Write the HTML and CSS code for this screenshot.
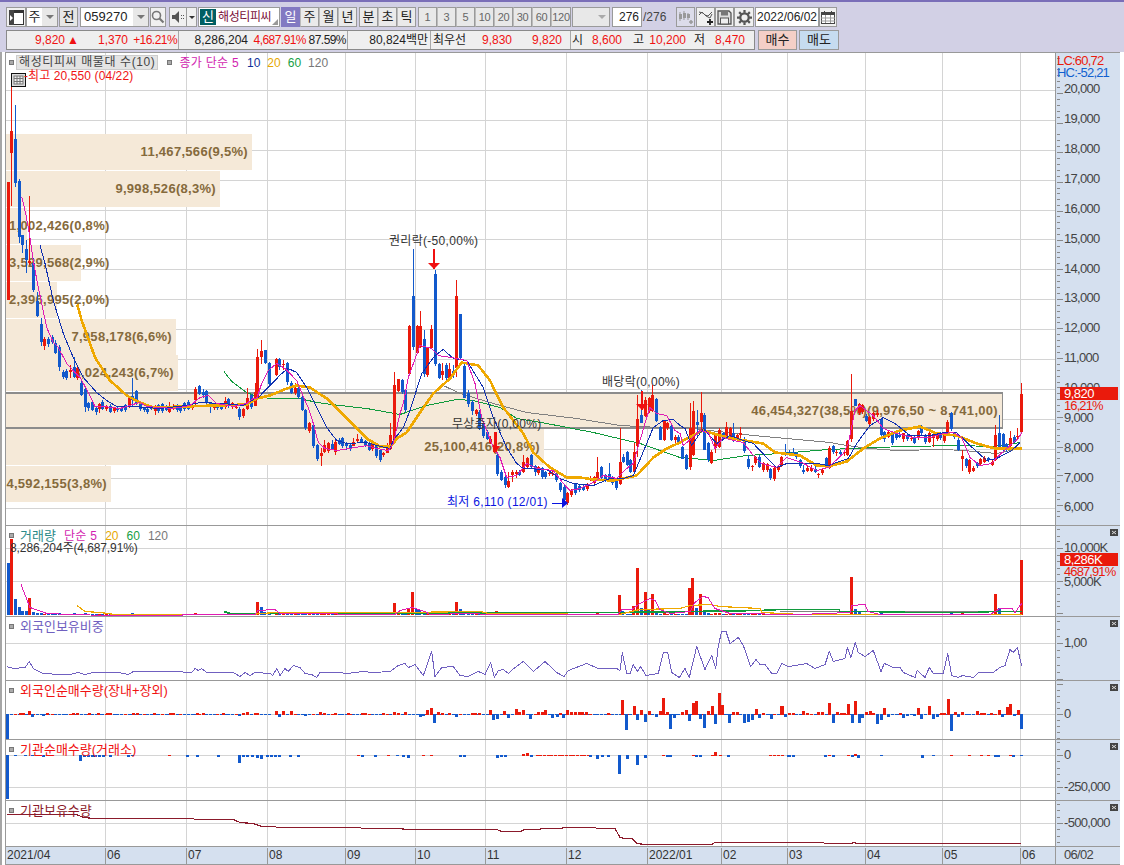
FILE: index.html
```html
<!DOCTYPE html>
<html lang="ko">
<head>
<meta charset="utf-8">
<title>해성티피씨 차트</title>
<link rel="stylesheet" href="styles.css">
</head>
<body>
<div class="topline"></div>
<div class="toolbar">
  <button class="btn w20"><svg width="15" height="15" viewBox="0 0 15 15"><rect x="0.500" y="0.500" width="14" height="14" fill="#fff" stroke="#333"/><rect x="0" y="0" width="15" height="3" fill="#333"/><rect x="0" y="0" width="5" height="15" fill="#444"/><path d="M1 5l3 3-3 3z" fill="#fff"/></svg></button>
  <div class="combo ml0 w32"><span class="combo-txt">주</span><span class="arrow w15"><i class="down"></i></span></div>
  <button class="btn w19 ml1 gray">전</button>
  <div class="combo ml2 w69"><span class="combo-txt code">059270</span><span class="arrow w15"><i class="down"></i></span></div>
  <button class="btn w16 ml1"><svg width="14" height="14" viewBox="0 0 14 14"><circle cx="5.500" cy="5.500" r="4" fill="none" stroke="#777" stroke-width="1.6"/><path d="M8.500 8.500l4 4" stroke="#777" stroke-width="2.2"/></svg></button>
  <button class="btn w18 ml3"><svg width="14" height="14" viewBox="0 0 14 14"><path d="M1 5h3l4-4v12l-4-4H1z" fill="#555"/><path d="M10 5h1v1h-1zM12 5h1v1h-1zM10 8h1v1h-1zM12 8h1v1h-1z" fill="#555"/></svg></button>
  <span class="arrow w10 boxed"><i class="down dark"></i></span>
  <div class="name ml1"><span class="sin">신</span><span class="name-txt">해성티피씨</span><i class="corner"></i></div>
  <div class="tabs ml1">
    <button class="tab active">일</button><button class="tab">주</button><button class="tab">월</button><button class="tab">년</button>
  </div>
  <div class="tabs ml2">
    <button class="tab">분</button><button class="tab">초</button><button class="tab">틱</button>
  </div>
  <div class="tabs ml2 light">
    <button class="tab">1</button><button class="tab">3</button><button class="tab">5</button><button class="tab">10</button><button class="tab">20</button><button class="tab">30</button><button class="tab">60</button><button class="tab wide">120</button>
  </div>
  <div class="combo ml1 w38 disabled"><span class="combo-txt"></span><span class="arrow w15"><i class="down pale"></i></span></div>
  <span class="count ml2">276</span><span class="total">/276</span>
  <button class="btn w19 pale-btn"><svg width="16" height="16" viewBox="0 0 16 16"><path d="M2 3v9M6 2v9M10 4v7" stroke="#999"/><rect x="1" y="5" width="3" height="5" fill="#999"/><rect x="5" y="4" width="3" height="5" fill="#999"/><rect x="9" y="5" width="3" height="4" fill="#999"/><path d="M11 13h4M13 11v4" stroke="#999" stroke-width="1.5"/></svg></button>
  <button class="btn w19 ml1"><svg width="16" height="16" viewBox="0 0 16 16"><path d="M1 6l3-3 3 3 3 1 4-4M1 3l4 1 3 3 4 2 2-4" fill="none" stroke="#555"/><path d="M9 13h6M12 10v6" stroke="#222" stroke-width="1.8"/></svg></button>
  <button class="btn w19"><svg width="15" height="15" viewBox="0 0 15 15"><path d="M1 1h11l2 2v11H1z" fill="#ddd" stroke="#555" stroke-width="1.3"/><rect x="4" y="1.500" width="7" height="4" fill="#777"/><rect x="3.500" y="8" width="8" height="6" fill="#eee" stroke="#555"/></svg></button>
  <button class="btn w20"><svg width="15" height="15" viewBox="0 0 16 16"><circle cx="8" cy="8" r="4.500" fill="none" stroke="#555" stroke-width="2.4"/><path d="M8 0v3M8 13v3M0 8h3M13 8h3M2.300 2.300l2.200 2.200M11.500 11.500l2.200 2.200M2.300 13.700l2.200-2.200M11.500 4.500l2.200-2.200" stroke="#555" stroke-width="2.4"/></svg></button>
  <span class="date ml1">2022/06/02</span>
  <button class="btn w18"><svg width="14" height="13" viewBox="0 0 14 13"><rect x="0.500" y="1.500" width="13" height="11" fill="#fff" stroke="#444"/><rect x="0" y="1" width="14" height="3" fill="#444"/><rect x="3" y="0" width="1" height="2" fill="#444"/><rect x="10" y="0" width="1" height="2" fill="#444"/><path d="M0 7h14M0 10h14M4.500 4v8M9.500 4v8" stroke="#999"/></svg></button>
</div>

<div class="inforow">
  <div class="info">
    <div class="cell cell-a">
      <span class="red a1">9,820</span><span class="red tri">▲</span><span class="red a3">1,370</span><span class="red a4 tight">+16.21%</span>
    </div>
    <div class="cell cell-b">
      <span class="b1">8,286,204</span><span class="red b2 tight">4,687.91%</span><span class="b3 tight">87.59%</span>
    </div>
    <div class="cell cell-c"><span class="c1">80,824백만</span></div>
    <div class="cell cell-d">
      <span class="d1">최우선</span><span class="red d2">9,830</span><span class="red d3">9,820</span>
    </div>
    <div class="cell cell-e">
      <span class="e-l">시</span><span class="red e1">8,600</span><span class="e-l e-g1">고</span><span class="red e2">10,200</span><span class="e-l e-g2">저</span><span class="red e3">8,470</span>
    </div>
  </div>
  <button class="trade buy">매수</button>
  <button class="trade sell">매도</button>
</div>

<main class="chart">
  <div class="frame">
    <section class="panel p-main">
      <div class="plot">
        <svg class="layer" id="main-grid"></svg>
        <div class="vp vp1"><b class="vl">11,467,566(9,5%)</b></div>
        <div class="vp vp2"><b class="vl">9,998,526(8,3%)</b></div>
        <div class="vp vp3"><b class="vl vl-left">1,002,426(0,8%)</b></div>
        <div class="vp vp4"><b class="vl vl-left">3,529,568(2,9%)</b></div>
        <div class="vp vp5"><b class="vl vl-left">2,396,995(2,0%)</b></div>
        <div class="vp vp6"><b class="vl">7,958,178(6,6%)</b></div>
        <div class="vp vp7"><b class="vl">8,024,243(6,7%)</b></div>
        <div class="vp vp8"><b class="vl">46,454,327(38,5%)(9,976,50 ~ 8,741,00)</b></div>
        <div class="vp vp9"><b class="vl">25,100,416(20,8%)</b></div>
        <div class="vp vp10"><b class="vl">4,592,155(3,8%)</b></div>
        <svg class="layer" id="main-top"></svg>
        <div class="legend">
          <i class="sq"></i><span class="legend-box">해성티피씨 매물대 수(10)</span>
          <i class="sq sq2"></i><span class="mag lg1">종가 단순 5</span><span class="navy lg2">10</span><span class="ora lg3">20</span><span class="grn lg3">60</span><span class="gry lg3">120</span>
        </div>
        <svg class="tbl-icon" width="15" height="14" viewBox="0 0 15 14"><rect x="0.500" y="0.500" width="14" height="13" fill="#ddd" stroke="#111"/><rect x="3" y="3" width="9" height="8" fill="#eee" stroke="#777"/><path d="M3 5.500h9M3 8.500h9M6 3v8M9 3v8" stroke="#777"/></svg>
        <span class="note hi-note">-최고 20,550 (04/22)</span>
        <span class="note n-right">권리락(-50,00%)</span>
        <span class="note n-div">배당락(0,00%)</span>
        <span class="note n-free">무상증자(0,00%)</span>
        <span class="note lo-note">최저 6,110 (12/01)</span>
      </div>
      <div class="axis" data-major="90" data-step="29.88" data-sub="5">
        <span class="lc">LC:60,72</span>
        <span class="hc">HC:-52,21</span>
        <span class="ax" style="top:29px">20,000</span><span class="ax" style="top:59px">19,000</span><span class="ax" style="top:89px">18,000</span><span class="ax" style="top:119px">17,000</span><span class="ax" style="top:149px">16,000</span><span class="ax" style="top:179px">15,000</span><span class="ax" style="top:209px">14,000</span><span class="ax" style="top:238px">13,000</span><span class="ax" style="top:268px">12,000</span><span class="ax" style="top:298px">11,000</span><span class="ax" style="top:328px">10,000</span><span class="ax" style="top:358px">9,000</span><span class="ax" style="top:388px">8,000</span><span class="ax" style="top:418px">7,000</span><span class="ax" style="top:447px">6,000</span>
        <span class="tag tag-main">9,820</span>
        <span class="tag-sub sub-main">16,21%</span>
      </div>
    </section>

    <section class="panel p-vol">
      <div class="plot">
        <svg class="layer" id="vol"></svg>
        <div class="legend legend-sub">
          <i class="sq"></i><span class="teal lv1">거래량</span><span class="mag lv2">단순 5</span><span class="ora lv3">20</span><span class="grn lv3">60</span><span class="gry lv3">120</span>
        </div>
        <span class="note vol-note">8,286,204주(4,687,91%)</span>
      </div>
      <div class="axis" data-major="548" data-step="33" data-sub="5">
        <i class="close"></i>
        <span class="ax" style="top:15px">10,000K</span><span class="ax" style="top:49px">5,000K</span>
        <span class="tag tag-vol">8,286K</span>
        <span class="tag-sub sub-vol">4687,91%</span>
      </div>
    </section>

    <section class="panel p-for">
      <div class="plot">
        <svg class="layer" id="for"></svg>
        <div class="legend legend-sub"><i class="sq"></i><span class="pur lv1">외국인보유비중</span></div>
      </div>
      <div class="axis" data-major="643" data-step="36" data-sub="5">
        <i class="close"></i>
        <span class="ax" style="top:19px">1,00</span>
      </div>
    </section>

    <section class="panel p-net">
      <div class="plot">
        <svg class="layer" id="net"></svg>
        <div class="legend legend-sub"><i class="sq"></i><span class="red lv1">외국인순매수량(장내+장외)</span></div>
      </div>
      <div class="axis" data-major="714" data-step="30" data-sub="5">
        <i class="close"></i>
        <span class="ax" style="top:26px">0</span>
      </div>
    </section>

    <section class="panel p-ins">
      <div class="plot">
        <svg class="layer" id="ins"></svg>
        <div class="legend legend-sub"><i class="sq"></i><span class="red lv1">기관순매수량(거래소)</span></div>
      </div>
      <div class="axis" data-major="755" data-step="32" data-sub="5">
        <i class="close"></i>
        <span class="ax" style="top:8px">0</span><span class="ax" style="top:40px">-250,000</span>
      </div>
    </section>

    <section class="panel p-hol">
      <div class="plot">
        <svg class="layer" id="hol"></svg>
        <div class="legend legend-sub"><i class="sq"></i><span class="mar lv1">기관보유수량</span></div>
      </div>
      <div class="axis" data-major="823" data-step="32" data-sub="5">
        <i class="close"></i>
        <span class="ax" style="top:15px">-500,000</span>
      </div>
    </section>

    <section class="panel p-x">
      <div class="plot xplot">
        <span class="xl x0">2021/04</span><span class="xl x1">06</span><span class="xl x2">07</span><span class="xl x3">08</span><span class="xl x4">09</span><span class="xl x5">10</span><span class="xl x6">11</span><span class="xl x7">12</span><span class="xl x8">2022/01</span><span class="xl x9">02</span><span class="xl x10">03</span><span class="xl x11">04</span><span class="xl x12">05</span><span class="xl x13">06</span>
      </div>
      <div class="axis xaxis"><span class="ax xdate">06/02</span></div>
    </section>
  </div>
</main>
<script src="script.js"></script>
</body>
</html>
```

FILE: styles.css
```css
* { box-sizing: border-box; }
html, body { margin: 0; padding: 0; }
body {
  width: 1124px; height: 865px; overflow: hidden;
  background: #d2d0e5;
  font: 12px/14px "Liberation Sans", "Noto Sans CJK KR", sans-serif;
  color: #222;
}
button { font: inherit; color: inherit; padding: 0; margin: 0; }
.topline { height: 2px; background: #7a6eb8; }

.toolbar { display: flex; height: 20px; margin: 5px 0 0 6px; }
.btn, .tab, .combo, .count, .date, .name, .boxed {
  height: 20px; border: 1px solid #9a9a9a; background: #f0f0f0;
  display: flex; align-items: center; justify-content: center; flex: none;
}
.gray { background: #e6e6e6; font-size: 13px; }
.pale-btn { background: #dcdcea; }
.w16 { width: 16px; } .w18 { width: 18px; } .w19 { width: 19px; } .w20 { width: 20px; }
.w32 { width: 32px; } .w38 { width: 38px; } .w69 { width: 69px; }
.ml0 { margin-left: 0; } .ml1 { margin-left: 1px; } .ml2 { margin-left: 2px; } .ml3 { margin-left: 3px; }
.combo { background: #fff; justify-content: flex-start; }
.combo-txt { flex: 1; text-align: center; font-size: 13px; }
.code { text-align: left; padding-left: 3px; font-size: 13px; letter-spacing: 0; }
.arrow { height: 18px; background: #e8e8e8; display: flex; align-items: center; justify-content: center; flex: none; }
.w15 { width: 15px; } .w10 { width: 10px; }
.boxed { height: 20px; background: #f0f0f0; border-left: 0; }
.down { width: 0; height: 0; border: 4px solid transparent; border-top: 4px solid #777; border-bottom: 0; }
.down.dark { border-top-color: #333; border-width: 3px 3px 0; }
.down.pale { border-top-color: #aaa; }
.disabled { background: #e8e8e8; }
.name { width: 82px; background: #fff; justify-content: flex-start; position: relative; padding-left: 1px; }
.sin { width: 16px; height: 16px; background: #005f63; color: #fff; text-align: center; line-height: 15px; font-size: 13px; flex: none; }
.name-txt { color: #7a0f38; font-size: 12px; letter-spacing: -.4px; margin-left: 2px; }
.corner { position: absolute; right: 1px; bottom: 1px; width: 0; height: 0; border-left: 6px solid transparent; border-bottom: 6px solid #999; }
.tabs { display: flex; }
.tab { width: 19px; background: #eaeaea; font-size: 13px; }
.tab + .tab { border-left: 1px solid #bbb; }
.tab.active { background: #8279c2; color: #fff; border-color: #8279c2; }
.light .tab { color: #666; font-size: 11px; background: #e8e8e8; letter-spacing: -.3px; }
.light .wide { width: 20px; }
.count { width: 30px; background: #fff; justify-content: flex-end; padding-right: 2px; }
.total { width: 34px; padding-left: 1px; line-height: 20px; color: #444; }
.date { width: 64px; background: #fff; font-size: 12px; }

.inforow { display: flex; height: 20px; margin: 3px 0 0 6px; }
.info { display: flex; height: 20px; width: 749px; border: 1px solid #8a8a8a; background: #efefef; line-height: 18px; }
.cell { display: flex; flex: none; height: 18px; border-right: 1px solid #a8a8a8; }
.cell span { display: block; text-align: right; white-space: nowrap; flex: none; }
.cell-a { width: 172px; } .cell-b { width: 169px; } .cell-c { width: 83px; } .cell-d { width: 140px; }
.cell-e { width: 183px; border-right: 0; }
.red { color: #f01212; }
.tight { letter-spacing: -.55px; }
.a1 { width: 58px; } .cell .tri { width: 16px; font-size: 12px; text-align: center; }
.a3 { width: 47px; } .a4 { width: 49px; }
.b1 { width: 69px; } .b2 { width: 58px; } .b3 { width: 40px; }
.c1 { width: 80px; }
.cell .d1 { width: 40px; padding-left: 2px; text-align: left; }
.d2 { width: 41px; } .d3 { width: 50px; }
.cell .e-l { width: 12px; text-align: left; padding-left: 1px; }
.e1 { width: 39px; } .cell .e-g1 { width: 23px; padding-left: 11px; } .e2 { width: 41px; }
.cell .e-g2 { width: 20px; padding-left: 8px; } .e3 { width: 39px; }
.trade { width: 39px; height: 20px; border: 1px solid #9a9a9a; margin-left: 2px; font-size: 13px; }
.buy { background: #f4cfc7; margin-left: 3px; }
.sell { background: #c6dcf0; width: 40px; }

.chart { margin-top: 2px; height: 813px; background: #fff; border-left: 2px solid #a6a6a6; padding-left: 3px; }
.frame { width: 1115px; border-left: 1px solid #999; border-bottom: 1px solid #999; }
.panel { display: flex; border-top: 1px solid #999; position: relative; }
.p-main { height: 473px; } .p-vol { height: 91px; } .p-for { height: 64px; } .p-net { height: 59px; }
.p-ins { height: 61px; } .p-hol { height: 46px; } .p-x { height: 18px; }
.plot { position: relative; width: 1049px; height: 100%; overflow: hidden; flex: none; background: #fff; }
.layer { position: absolute; inset: 0; width: 100%; height: 100%; display: block; }
.axis { position: relative; width: 65px; height: 100%; border-left: 1px solid #999; background: #d5e0ef; flex: none; overflow: hidden; color: #444; }
.axis svg { position: absolute; inset: 0; width: 100%; height: 100%; }
.ax { position: absolute; left: 8px; white-space: nowrap; font-size: 13px; letter-spacing: -.7px; }
.lc { position: absolute; left: 1px; top: 1px; color: #ea1a0c; font-size: 13px; letter-spacing: -.8px; }
.hc { position: absolute; left: 1px; top: 13px; color: #1060d0; font-size: 13px; letter-spacing: -.8px; }
.tag { position: absolute; left: 4px; width: 58px; height: 13px; background: #ea1a0c; color: #fff; padding-left: 4px; line-height: 13px; font-size: 13px; letter-spacing: -.5px; }
.tag-main { top: 334px; } .tag-vol { top: 27px; }
.tag-sub { position: absolute; left: 8px; color: #ea1a0c; font-size: 13px; line-height: 12px; letter-spacing: -.9px; white-space: nowrap; }
.sub-main { top: 347px; } .sub-vol { top: 40px; }
.close { position: absolute; right: 2px; top: 3px; width: 8px; height: 7px; background: #444; z-index: 2; }

.vp { position: absolute; left: 0; height: 36px; background: #f5e9d8; line-height: 36px; }
.vl { position: absolute; right: 4px; top: 0; white-space: nowrap; color: #856a3c; font-size: 13px; font-weight: 700; letter-spacing: .3px; }
.vl-left { right: auto; left: 3px; }
.vp1 { top: 81px; width: 246px; } .vp2 { top: 118px; width: 214px; } .vp3 { top: 155px; width: 21px; }
.vp4 { top: 192px; width: 75px; } .vp5 { top: 229px; width: 51px; } .vp6 { top: 266px; width: 170px; }
.vp7 { top: 302px; width: 172px; }
.vp8 { top: 339px; width: 997px; height: 37px; border: 1px solid #8c8c8c; border-width: 2px 1px 2px 0; line-height: 33px; }
.vp9 { top: 376px; width: 538px; height: 36px; }
.vp10 { top: 413px; width: 105px; }

.legend { position: absolute; left: 3px; top: 2px; display: flex; align-items: center; height: 15px; white-space: nowrap; }
.sq { width: 5px; height: 5px; background: #aaa; border: 1px solid #777; flex: none; }
.sq2 { margin-left: 9px; }
.legend-box { margin-left: 2px; height: 15px; padding: 0 2px; background: #e4e4e4; border: 1px solid #ccc; line-height: 13px; color: #444; letter-spacing: .6px; }
.mag { color: #d21fb0; letter-spacing: .3px; } .navy { color: #10309a; } .ora { color: #e8a800; } .grn { color: #16a044; } .gry { color: #777; }
.teal { color: #2a8a88; } .pur { color: #7060c0; } .mar { color: #8b1a2b; }
.lg1 { margin-left: 7px; } .lg2 { margin-left: 8px; } .lg3 { margin-left: 7px; }
.lv1 { margin-left: 6px; font-size: 13px; } .lv2 { margin-left: 8px; } .lv3 { margin-left: 8px; }
.tbl-icon { position: absolute; left: 5px; top: 20px; }
.note { position: absolute; white-space: nowrap; color: #333; letter-spacing: .3px; }
.hi-note { left: 18px; top: 16px; color: #f01212; letter-spacing: .1px; }
.n-right { left: 383px; top: 181px; }
.n-div { left: 596px; top: 322px; }
.n-free { left: 446px; top: 364px; }
.lo-note { left: 441px; top: 442px; color: #0a14e0; }
.vol-note { left: 4px; top: 15px; letter-spacing: -.1px; }

.xplot { background: #d5e0ef; }
.xl { position: absolute; top: 1px; border-left: 1px solid #999; height: 17px; padding-left: 1px; color: #333; }
.x0 { left: 0; border-left: 0; } .x1 { left: 99px; } .x2 { left: 180px; } .x3 { left: 261px; } .x4 { left: 339px; }
.x5 { left: 409px; } .x6 { left: 479px; } .x7 { left: 560px; } .x8 { left: 641px; } .x9 { left: 715px; }
.x10 { left: 781px; } .x11 { left: 859px; } .x12 { left: 936px; } .x13 { left: 1014px; }
.xdate { top: 1px; }
```

FILE: script.js
```js
(function () {
const NS = 'http://www.w3.org/2000/svg';
const RED = '#ea1a0c', BLUE = '#1259cc', GRID = '#d4d4d4';
const VX = [105.5, 186.5, 267, 345, 415, 485, 566, 647, 721, 787, 865, 942, 1020];

function layer(id) {
  const s = document.getElementById(id), r = s.getBoundingClientRect();
  s.setAttribute('viewBox', `${r.left} ${r.top} ${r.width} ${r.height}`);
  return s;
}
function add(s, tag, attrs) {
  const e = document.createElementNS(NS, tag);
  for (const k in attrs) e.setAttribute(k, attrs[k]);
  s.appendChild(e);
  return e;
}
function rect(s, x, y, w, h, fill) {
  add(s, 'rect', { x, y, width: w, height: h, fill, 'shape-rendering': 'crispEdges' });
}
function gridLines(s, ys, y0, y1) {
  VX.forEach(x => rect(s, Math.floor(x), y0, 1, y1 - y0, GRID));
  ys.forEach(y => rect(s, 6, Math.round(y), 1049, 1, GRID));
}
function line(s, pts, color, w) {
  // pixel-centred y so flat runs never fall between two rows
  add(s, 'polyline', {
    points: pts.map(p => p[0].toFixed(1) + ',' + (Math.round(p[1]) + 0.5)).join(' '),
    fill: 'none', stroke: color, 'stroke-width': w, 'shape-rendering': 'crispEdges', 'stroke-linejoin': 'round'
  });
}
// builds a line from traced pieces [ox, oy, scale, [[a, b], ...]]
function trace(pieces) {
  const out = [];
  pieces.forEach(([ox, oy, s, pts]) => pts.forEach(([a, b]) => {
    const x = ox + a / s, y = oy + b / s;
    if (!out.length || x > out[out.length - 1][0]) out.push([x, y]);
  }));
  return out;
}

/* ---------- candles: [a, colour, top, bottom, high, low] ---------- */
const candles = [];
function C(ox, oy, s, rows) {
  rows.forEach(([a, c, t, b, h, l]) => {
    const T = oy + t / s, B = oy + b / s;
    candles.push({
      x: ox + a / s, c: c === 'r' ? RED : BLUE, t: T, b: Math.max(B, T + 1),
      h: h != null ? oy + h / s : T - 1.5, l: l != null ? oy + l / s : B + 1.5
    });
  });
}
C(0, 0, 1, [
  [7.5,'r',182,300,182,300],[11,'r',131,153,79,206],[14.5,'b',139,183,105,187],[18.5,'b',181,237,179,243],
  [22,'b',235,245,235,253],[25.5,'b',249,260,240,273],[29,'r',261,263,196,265],[33,'b',263,290,258,292],
  [36.7,'b',301,316,292,317],[40.5,'b',324,342,318,346],[44,'r',339,346,337,350],[48,'b',339,344,337,347],
  [51.5,'b',337,342,335,344],[55,'b',343,353,340,354],[59,'b',347,367,345,371],[62.5,'b',372,377,370,379],
  [66,'b',371,378,369,380],[70,'r',370,372,365,378],[73.5,'b',367,377,357,378],[77,'r',368,378,366,380],
  [81,'b',383,395,380,396],[84.5,'b',389,407,388,412],[88,'b',403,408,402,411],[92,'b',402,410,401,411],
  [95.5,'b',408,412,407,415],[99,'r',404,409,403,413]
]);
C(100, 340, 3, [
  [7,'b',185,205],[18,'r',198,206],[30,'b',197,215],[42,'r',205,215],[52,'b',204,210],[64,'b',203,212],[76,'b',195,210],
  [86,'r',172,200],[97,'b',167,178,113,200],[108,'b',154,190],[119,'b',190,208],[131,'b',205,212],[142,'b',207,215],
  [153,'b',200,207],[164,'r',205,215,195,225],[175,'b',195,213],[186,'b',193,213],[197,'b',200,210],[208,'r',200,215,185,218],
  [219,'r',197,207],[230,'b',195,210],[241,'b',198,212],[253,'b',190,207],[264,'b',185,207],[275,'r',195,205],
  [286,'r',148,180,140,195],[297,'b',138,162,135,165],[308,'b',155,165,148,175],[319,'b',153,188],[330,'b',187,202,185,218],
  [341,'r',195,203],[352,'b',195,205],[362,'b',197,205],[374,'r',183,200,170,205],[385,'b',178,198],[396,'r',190,202],
  [407,'r',200,203],[418,'b',207,232,200,240],[430,'r',208,230],[440,'r',173,205,145,210],[452,'b',165,200],
  [464,'r',155,198,130,200],[472,'r',50,175,27,177],[484,'r',33,50,0,72],[496,'b',30,70,30,72],[507,'b',70,133,65,135],
  [527,'r',57,105,55,110],[537,'b',57,82,55,90],[549,'r',73,77,60,90],[561,'b',70,128,65,135],[572,'b',128,157],
  [584,'r',145,160,130,165],[595,'b',145,172,140,175],[606,'b',170,210],[616,'b',210,265],[628,'r',250,275],
  [640,'b',255,318],[650,'b',315,358],[662,'r',338,347,325,378],[673,'r',315,335,300,338],[683,'r',310,335],[695,'b',313,327,300,330],
  [706,'r',305,335,300,345],[716,'b',300,313,295,315],[727,'b',295,318],[738,'b',310,318,305,330],[750,'b',315,328],[760,'r',305,317,295,320],
  [772,'r',298,303,283,306],[783,'b',296,305,290,308],[794,'b',303,316],[806,'b',308,328],[817,'r',312,326],[827,'b',315,347],
  [839,'b',330,360],[850,'r',338,344,335,350],[860,'r',320,337,310,340],[871,'r',285,327,250,330],[883,'r',135,300,95,305]
]);
C(360, 230, 3, [
  [113,'r',448,485,448,488],[125,'b',450,485],[136,'b',480,540],[146,'r',288,433],[158,'b',198,350,58,360],[170,'r',288,370,285,372],
  [181,'r',288,350,243,355],[191,'b',327,432,300,440],[202,'r',355,437],[214,'r',297,355,285,358],[224,'b',133,402,120,408],
  [236,'b',403,445,400,448],[247,'r',423,435,400,450],[257,'b',405,445,400,450],[268,'r',418,452,400,455],[280,'b',422,435,405,445],
  [289,'r',198,415,150,440],[301,'b',253,385,253,390],[313,'b',407,503,400,505],[325,'b',490,522,480,530],[335,'b',517,545,510,555],
  [347,'r',540,551],[358,'b',545,597],[368,'b',580,620],[380,'b',605,625],[391,'r',628,640,618,642],[403,'r',645,665,605,667],
  [412,'b',675,732],[424,'b',725,750],[434,'b',742,765,738,775],[445,'r',752,770,725,772],[456,'r',726,735,720,755],
  [468,'r',725,730,720,745],[478,'b',725,735],[490,'r',695,725,675,728],[501,'r',683,710,680,712],[512,'b',675,710],
  [524,'b',708,727,705,738],[535,'r',712,730],[545,'b',715,743],[556,'b',727,742],[566,'r',730,733,724,740],[577,'r',730,733,724,740],
  [589,'b',733,750],[600,'b',760,782],[611,'b',770,810],[622,'r',790,820],[634,'r',780,795],[645,'b',762,790],[657,'b',768,780],
  [668,'b',770,778],[680,'r',762,778],[691,'r',745,748,738,752],[702,'r',742,760],[712,'r',727,745,680,748],[722,'b',712,745],
  [735,'b',735,750],[746,'b',733,750,700,752],[757,'b',742,760],[768,'b',748,775],[779,'r',695,762,595,765],[789,'b',680,695,672,698],
  [800,'b',665,705,662,708],[811,'b',690,725,688,730],[821,'r',665,725,640,730],[832,'r',568,650,495,680],[844,'b',555,578,480,580],
  [856,'r',510,557,500,560],[866,'r',505,545,500,548],[877,'r',495,542,465,545],[889,'b',507,573,505,576],[899,'b',590,628,588,630],
  [911,'r',572,630,570,632],[921,'r',580,595],[932,'b',587,630],[944,'r',620,630,615,640],[955,'b',620,640]
]);
C(620, 380, 3, [
  [186,'b',200,235,198,237],[197,'b',225,268,223,270],[209,'r',145,262,68,270],[220,'r',92,225,62,228],[230,'b',125,135,90,175],
  [242,'r',100,127,37,155],[253,'b',105,210,100,212],[263,'b',190,240],[274,'r',215,247],[286,'r',160,205,158,218],[297,'r',150,200,145,205],
  [309,'b',160,175],[319,'r',140,170,125,175],[330,'r',145,172,140,175],[340,'b',160,185,130,188],[351,'r',165,175],[361,'r',160,165,142,175],
  [373,'b',178,215,170,218],[385,'b',238,262,225,268],[395,'r',258,262,256,275],[406,'r',232,250],[418,'b',232,262,225,265],
  [429,'r',250,270],[440,'r',252,270],[451,'b',268,295],[463,'r',265,297],[473,'r',262,270],[484,'r',232,257],[496,'b',215,225,193,228],
  [507,'b',215,225],[518,'b',215,225,205,230],[528,'b',220,233],[539,'b',240,258],[550,'b',270,275,255,283],[562,'r',263,273],
  [572,'r',263,272,255,275],[584,'b',268,278,250,280],[595,'r',283,287,278,292],[606,'r',270,280],[617,'b',235,255],[628,'r',203,262]
]);
C(830, 370, 3, [
  [9,'b',228,245],[19,'r',247,250,240,258],[30,'b',245,250,240,258],[41,'r',247,250,240,258],[52,'r',212,255,210,258],[64,'r',122,205,12,215],
  [76,'b',88,108,88,110],[87,'r',102,130],[97,'r',105,125],[109,'b',137,153],[118,'r',142,162],[130,'r',130,147],[142,'r',128,133,120,140],
  [153,'b',148,195],[163,'b',185,205,183,215],[175,'r',185,200],[186,'b',187,220],[197,'b',190,205],[208,'b',195,200,180,205],[220,'r',190,207,188,215],
  [232,'b',195,208],[243,'r',203,207,195,212],[253,'b',200,217],[263,'r',183,205],[274,'b',168,190],[286,'b',195,215],[297,'r',188,215],
  [308,'r',195,205,193,233],[320,'r',190,208],[331,'b',190,205],[341,'r',193,215],[352,'r',155,193],[364,'b',130,178],[373,'b',190,203],
  [385,'b',210,240,195,242],[397,'r',258,267,240,303],[408,'b',268,290],[418,'r',270,305],[430,'r',293,302],[441,'b',280,290],[451,'r',268,283],
  [463,'r',263,275],[473,'b',265,270],[485,'r',275,285],[496,'r',195,270,165,272],[508,'b',190,237,135,240],[518,'b',193,237],[529,'b',223,240],
  [541,'r',205,228,183,230],[552,'b',200,215,195,218],[562,'r',198,202,175,210],[574,'r',72,187,40,190]
]);

/* ---------- moving averages ---------- */
const ma5 = trace([
  [0,100,3,[[65,287],[77,340],[88,400],[100,480],[112,545],[125,610],[140,680],[160,725],[175,740],[200,790],[225,815],[240,830],[262,870],[285,918],[310,918],[360,925],[398,912],[420,905],[440,918],[520,925],[570,915],[600,890],[625,885],[650,910],[700,918],[740,910],[760,895]]],
  [100,340,3,[[285,195],[300,175],[330,168],[350,185],[400,193],[440,200],[470,175],[485,130],[505,90],[530,70],[555,85],[590,120],[615,180],[625,200],[640,250],[655,305],[675,325],[710,330],[800,315],[830,325],[865,330],[880,310],[900,220]]],
  [360,230,3,[[115,590],[130,520],[145,440],[180,345],[215,355],[235,375],[290,385],[320,390],[345,460],[365,560],[395,640],[420,680],[440,740],[470,735],[500,700],[530,715],[580,720],[610,760],[630,780],[660,775],[700,755],[730,735],[770,745],[800,715],[820,700],[840,630],[860,560],[870,530],[890,550],[920,555],[945,600],[960,610]]],
  [620,380,3,[[190,195],[215,175],[240,150],[265,155],[285,205],[310,170],[340,180],[370,185],[395,220],[425,250],[470,262],[500,230],[545,245],[590,270],[625,262]]],
  [830,370,3,[[40,250],[55,220],[75,120],[90,105],[130,135],[160,175],[200,190],[250,200],[300,200],[340,190],[370,185],[395,200],[420,260],[450,285],[485,280],[500,260],[540,225],[565,205],[575,185]]]
]);
const ma10 = trace([
  [0,100,3,[[120,435],[135,490],[160,600],[190,700],[220,770],[250,830],[290,875],[320,900],[350,918],[400,918],[480,925],[560,915],[600,905],[670,908],[730,915],[770,890]]],
  [100,340,3,[[285,195],[300,187],[345,187],[400,193],[440,198],[475,170],[510,135],[545,100],[565,85],[590,95],[620,140],[650,200],[680,260],[710,300],[740,310],[800,305],[830,315],[870,325]]],
  [360,230,3,[[100,630],[130,590],[150,540],[185,430],[225,375],[250,358],[280,385],[320,390],[370,470],[400,560],[440,650],[470,700],[490,715],[560,718],[600,745],[640,760],[700,765],[750,745],[790,745],[820,735],[860,640],[880,590],[910,570],[940,568],[960,585]]],
  [620,380,3,[[195,145],[215,195],[250,145],[290,190],[330,165],[370,180],[400,190],[440,230],[470,260],[500,250],[590,250],[625,255]]],
  [830,370,3,[[55,265],[80,220],[120,165],[160,140],[195,160],[240,195],[300,195],[345,185],[380,185],[420,225],[470,270],[500,265],[545,240],[570,215]]]
]);
const ma20 = trace([
  [0,100,3,[[232,612],[245,660],[270,730],[285,770],[330,840],[380,885],[420,905],[460,920],[550,918],[650,915],[740,912],[770,895]]],
  [100,340,3,[[285,198],[300,195],[430,192],[470,180],[510,165],[560,145],[590,135],[630,140],[680,175],[740,235],[800,295],[840,318],[870,318],[883,305]]],
  [360,230,3,[[110,625],[140,605],[180,545],[220,490],[270,445],[305,395],[355,405],[390,450],[430,530],[490,610],[520,665],[570,710],[620,740],[660,740],[700,748],[760,750],[830,735],[880,680],[920,655],[960,635]]],
  [620,380,3,[[200,175],[250,150],[300,165],[340,175],[375,180],[430,190],[465,215],[540,225],[590,255],[625,257]]],
  [830,370,3,[[50,272],[100,235],[150,205],[210,180],[270,168],[320,190],[380,195],[440,220],[495,235],[540,235],[575,233]]]
]);
const ma60 = trace([
  [100,340,3,[[372,93],[395,122],[440,155],[470,168],[510,173],[600,175],[650,185],[720,195],[800,205],[900,222]]],
  [360,230,3,[[100,552],[200,525],[290,507],[340,510],[420,530],[470,565],[560,578],[700,605],[840,640],[960,680]]],
  [620,380,3,[[190,232],[280,240],[380,225],[480,218],[625,208]]],
  [830,370,3,[[135,232],[230,228],[380,225],[490,228],[570,215]]]
]);
const ma120 = trace([
  [360,230,3,[[250,465],[300,490],[400,520],[500,545],[650,565],[780,585],[960,595]]],
  [620,380,3,[[195,140],[270,150],[400,165],[500,175],[630,185]]],
  [830,370,3,[[50,225],[120,235],[200,240],[340,238],[400,240],[500,250],[570,235]]]
]);

/* ---------- main panel ---------- */
const gridMain = layer('main-grid');
const priceYs = [];
for (let i = 0; i < 15; i++) priceYs.push(90 + i * 29.88);
gridLines(gridMain, priceYs, 53, 525);

const front = layer('main-top');
line(front, ma120, '#808080', 1);
line(front, ma60, '#109a3c', 1);
candles.forEach(k => {
  const x = Math.round(k.x);
  rect(front, x, Math.round(k.h), 1, Math.round(k.l - k.h), k.c);
  rect(front, x - 1, Math.round(k.t), 3, Math.max(1, Math.round(k.b - k.t)), k.c);
});
line(front, ma20, '#efa800', 2.6);
line(front, ma10, '#1030b0', 1);
line(front, ma5, '#e01cb4', 1);
// event arrows
function dropArrow(x, y0, y1, hw, hh) {
  rect(front, x - 1, y0, 2, y1 - y0, '#f01010');
  add(front, 'polygon', { points: `${x - hw},${y1 - hh} ${x + hw},${y1 - hh} ${x},${y1}`, fill: '#f01010' });
}
dropArrow(434, 249, 269, 6, 6);
dropArrow(642, 391, 410, 6, 6);
dropArrow(496, 432, 452, 4, 6);
rect(front, 552, 503, 10, 1, '#0a14e0');
add(front, 'polygon', { points: '562,498 562,508 568,503', fill: '#0a14e0' });

/* ---------- volume ---------- */
const vol = layer('vol');
gridLines(vol, [548, 581], 525, 616);
const bigVol = {};
[[7.5,BLUE,563],[10.5,RED,539],[14.5,BLUE,599],[18.5,BLUE,607],[22,BLUE,611],[25.5,BLUE,611],[29,RED,598],[33,BLUE,612],
 [257,RED,602],[260.5,BLUE,607],[264,BLUE,612],[394,RED,603],[408,RED,608],[412,RED,592],[416,BLUE,609],[419,BLUE,610],
 [456,RED,602],[460,BLUE,609],[463,BLUE,611],[496,RED,611],[619,RED,595],[622,BLUE,611],[633,RED,606],[637,RED,568],[641,BLUE,608],
 [645,RED,592],[648,BLUE,610],[652,RED,594],[689,RED,588],[692,RED,578],[696,BLUE,608],[700,RED,594],[704,BLUE,611],
 [851,RED,577],[855,BLUE,609],[859,BLUE,611],[995,RED,594],[999,BLUE,608],[1021,RED,560]
].forEach(([x, c, y]) => { bigVol[Math.round(x)] = [c, y]; rect(vol, Math.round(x) - 1, y, 3, 615 - y, c); });
candles.forEach(k => {
  const x = Math.round(k.x);
  if (bigVol[x] || bigVol[x - 1] || bigVol[x + 1]) return;
  const h = Math.min(3, Math.max(1, Math.round((k.l - k.h) / 12)));
  rect(vol, x - 1, 615 - h, 3, h, k.c);
});
line(vol, [[780,611],[1022,611]], '#808080', 1);
line(vol, [[224,611],[230,613],[350,613],[620,612],[690,611],[760,610],[780,609],[839,609],[840,611],[870,611],[913,612],[975,612],[993,611],[1022,611]], '#109a3c', 1.6);
line(vol, [[77,605],[85,611],[100,612],[115,614],[250,614],[275,612],[330,612],[400,612],[480,611],[488,613],[620,614],[640,609],[680,608],[690,605],[710,604],[720,606],[760,608],[762,612],[800,614],[1022,614]], '#efa800', 1.2);
line(vol, [[21,584],[30,607],[47,613],[70,614],[110,615],[255,614],[258,610],[275,609],[280,613],[395,614],[400,610],[412,607],[425,611],[430,614],[470,613],[490,614],[618,614],[622,609],[632,609],[640,603],[650,598],[655,600],[660,609],[670,613],[690,611],[695,602],[703,596],[708,597],[715,608],[730,613],[800,614],[850,612],[852,605],[865,604],[868,611],[880,614],[990,614],[1000,608],[1012,608],[1015,612],[1020,605],[1022,603]], '#e01cb4', 1);

/* ---------- foreign ownership ---------- */
const fr = layer('for');
gridLines(fr, [643], 616, 680);
const forLine = trace([
  [0,520,3,[[20,438],[40,443],[75,441],[88,424],[100,443],[130,458],[180,463],[210,463],[235,457],[255,462],[280,457],[310,457],[355,456],[385,462],[400,452],[470,453],[520,453],[575,455],[585,445],[595,450],[605,445],[620,455],[700,457],[720,468],[735,457],[750,465],[765,457],[810,458],[818,465],[830,445],[840,465],[855,445],[865,452],[880,436],[900,442],[915,458],[935,462],[950,470],[960,455],[985,457],[1020,457],[1040,460],[1090,453],[1120,455],[1170,453],[1195,436]]],
  [400,520,3,[[15,430],[25,442],[45,432],[70,466],[95,393],[105,467],[125,440],[160,438],[180,465],[205,468],[235,453],[255,462],[272,425],[283,472],[295,450],[310,447],[325,460],[345,440],[370,424],[400,452],[435,424],[470,455],[492,467],[505,450],[560,430],[595,443],[650,443],[660,450],[667,395],[680,458],[690,460],[700,432],[712,452],[722,438],[738,466],[775,460],[790,395],[803,395],[815,455],[838,470],[855,445],[868,470],[890,377],[915,448],[935,405],[947,445],[955,375],[965,332],[978,332],[990,368],[1015,352],[1030,375],[1052,437],[1068,418],[1080,432],[1095,432],[1115,458],[1130,460],[1145,430],[1165,437]]],
  [780,520,3,[[15,440],[45,436],[80,430],[105,445],[135,432],[148,393],[160,423],[195,413],[202,380],[213,412],[226,365],[235,395],[255,408],[280,390],[303,452],[313,430],[340,442],[360,442],[370,457],[405,472],[412,450],[435,470],[448,442],[460,460],[490,460],[503,400],[515,465],[535,472],[548,465],[580,470],[595,457],[640,455],[660,440],[675,435],[690,387],[700,395],[712,382],[725,435]]]
]);
line(fr, forLine, '#7060c0', 1);

/* ---------- net buying bars ---------- */
function bars(s, base, ox, oy, list) {
  list.forEach(([a, c, v]) => {
    const x = Math.round(ox + a / 3), y = Math.round(oy + v / 3);
    if (c === 'r') rect(s, x - 1, y, 3, base - y + 1, RED);
    else rect(s, x - 1, base, 3, y - base, BLUE);
  });
}
const net = layer('net');
gridLines(net, [714], 680, 739);
candles.forEach((k, i) => { if (i > 0 && Math.round(k.x) < 1020) rect(net, Math.round(k.x) - 1, 714, 3, 1, i % 5 === 2 ? RED : BLUE); });
rect(net, 6, 714, 3, 25, BLUE);
bars(net, 714, 0, 520, [[60,'r',578],[70,'r',578],[88,'r',573],[97,'b',590],[130,'b',587],[142,'r',578],[218,'r',578],[230,'r',578],[268,'r',578],[295,'r',578],[320,'r',578],[330,'r',578],[400,'r',578],[410,'r',578],[462,'r',578],[510,'r',578],[520,'r',578],[590,'r',578],[608,'r',578],[670,'r',578],[718,'b',587],[730,'r',578],[740,'r',575],[765,'r',578],[772,'r',578],[828,'r',573],[838,'b',590],[850,'r',573],[872,'r',573],[915,'b',587],[960,'r',576],[972,'r',578],[1005,'r',578],[1045,'r',578],[1085,'r',578],[1095,'r',578],[1150,'r',578],[1183,'r',576],[1195,'r',578]]);
bars(net, 714, 400, 520, [[60,'b',590],[70,'b',588],[103,'b',608],[169,'b',590],[280,'b',600],[292,'b',598],[325,'b',594],[391,'b',597],[457,'b',593],[470,'b',590],[490,'b',594],[679,'b',630],[712,'b',600],[736,'b',606],[769,'b',590],[811,'b',627],[823,'b',594],[868,'b',603],[901,'b',596],[913,'b',623],[946,'b',612],[988,'b',608],[1033,'b',608],[1045,'b',605],[1055,'b',600],[1078,'b',594],[1112,'b',596],[1156,'b',590],
  [16,'r',577],[80,'r',570],[94,'r',564],[115,'r',575],[127,'r',578],[148,'r',578],[215,'r',579],[226,'r',579],[238,'r',579],[271,'r',570],[313,'r',573],[347,'r',567],[358,'r',575],[370,'r',570],[415,'r',576],[425,'r',576],[436,'r',570],[480,'r',578],[502,'r',570],[514,'r',576],[525,'r',576],[536,'r',576],[547,'r',576],[559,'r',576],[625,'r',578],[667,'r',540],[701,'r',558],[724,'r',570],[747,'r',573],[780,'r',573],[790,'r',534],[801,'r',575],[845,'r',575],[857,'r',570],[878,'r',550],[889,'r',543],[923,'r',573],[935,'r',558],[956,'r',519],[967,'r',555],[1000,'r',575],[1011,'r',575],[1067,'r',567],[1090,'r',578],[1145,'r',558],[1167,'r',578],[1178,'r',578]]);
bars(net, 714, 780, 520, [[4,'r',558],[27,'r',578],[38,'r',578],[70,'r',573],[82,'r',578],[115,'r',575],[127,'r',575],[148,'r',549],[170,'r',575],[182,'r',578],[192,'r',578],[203,'r',552],[226,'r',543],[258,'r',575],[270,'r',573],[280,'r',578],[313,'r',564],[360,'r',578],[413,'r',564],[448,'r',558],[482,'r',578],[492,'r',578],[503,'r',537],[524,'r',575],[547,'r',575],[590,'r',573],[602,'r',578],[613,'r',578],[634,'r',578],[658,'r',570],[680,'r',561],[691,'r',552],[713,'r',570],
  [16,'b',590],[160,'b',608],[215,'b',608],[236,'b',608],[247,'b',594],[292,'b',612],[304,'b',600],[325,'b',590],[370,'b',594],[382,'b',589],[403,'b',588],[424,'b',597],[458,'b',597],[470,'b',590],[514,'b',632],[535,'b',590],[667,'b',590],[702,'b',587],[724,'b',627]]);

/* ---------- institution bars ---------- */
const ins = layer('ins');
gridLines(ins, [755, 787], 739, 800);
rect(ins, 6, 755, 3, 44, BLUE);
bars(ins, 755, 0, 520, [[241,'b',722],[253,'b',712],[264,'b',710],[275,'b',710],[286,'b',710],[298,'b',710],[310,'b',710],[330,'b',710],[385,'b',710],[397,'b',709],[560,'b',710],[590,'b',710],[655,'b',710],[718,'b',729],[730,'b',712],[742,'b',710],[755,'b',710],[770,'b',714],[784,'b',716],[800,'b',711],[812,'b',710],[825,'b',710],[838,'b',710],[870,'b',710],[895,'b',710],[508,'r',704],[1075,'r',704],[1085,'b',710],[1125,'b',710],[1165,'r',704],[1190,'b',709],[45,'b',708],[75,'b',708],[95,'b',708],[130,'b',710]]);
const insRed = [];
for (let a = 410; a < 565; a += 11) insRed.push([a, 'r', 704]);
bars(ins, 755, 400, 520, insRed.concat([[658,'b',762],[680,'b',717],[712,'b',735],[736,'b',714],[592,'b',717],[25,'b',714],[292,'b',714],[180,'b',711],[192,'b',710],[303,'b',710],[314,'b',710],[370,'r',702],[382,'r',699],[392,'b',711],[946,'r',696],[900,'b',711],[889,'b',710],[625,'b',711],[570,'b',710],[605,'b',710],[70,'r',704],[94,'r',704],[10,'b',710],[790,'r',704],[801,'b',710],[810,'b',710],[880,'r',704],[935,'r',704],[960,'r',704],[985,'b',711],[1110,'r',704],[1122,'r',704],[1135,'r',704],[1145,'r',704],[1165,'b',710]]));
bars(ins, 755, 780, 520, [[425,'b',714],[235,'b',714],[226,'r',702],[215,'b',711],[205,'r',704],[160,'b',711],[148,'r',704],[135,'b',711],[26,'b',711],[38,'b',710],[700,'b',711],[645,'b',711],[655,'b',711],[690,'r',704],[724,'b',709],[303,'b',709],[458,'b',709],[514,'r',704],[568,'r',704],[602,'r',704],[624,'r',704]]);

/* ---------- institution holdings ---------- */
const hol = layer('hol');
gridLines(hol, [823], 800, 846);
line(hol, trace([
  [0,520,3,[[22,883],[230,883],[250,890],[285,895],[580,895],[585,898],[700,898],[720,907],[760,910],[785,918],[825,918],[830,922],[1080,922],[1085,925],[1199,925]]],
  [400,520,3,[[20,928],[290,928],[305,934],[360,934],[375,928],[420,928],[425,925],[485,925],[490,922],[585,922],[590,925],[645,925],[660,950],[675,953],[695,955],[712,968],[735,972],[935,972],[945,967],[1140,967]]],
  [780,520,3,[[0,967],[130,967],[135,970],[215,970],[222,967],[232,970],[722,970]]]
]), '#8b1a2b', 1.2);

/* ---------- axis ticks and close buttons ---------- */
document.querySelectorAll('.axis[data-major]').forEach(a => {
  const r = a.getBoundingClientRect();
  const s = document.createElementNS(NS, 'svg');
  s.setAttribute('viewBox', `${r.left} ${r.top} ${r.width} ${r.height}`);
  a.insertBefore(s, a.firstChild);
  const major = +a.dataset.major, step = +a.dataset.step, sub = +a.dataset.sub;
  const minor = step / sub;
  for (let i = -80; i < 160; i++) {
    const y = major + i * minor;
    if (y < r.top + 1 || y > r.bottom - 1) continue;
    const isMajor = i % sub === 0;
    rect(s, r.left + 1, Math.round(y), isMajor ? 6 : 3, 1, '#888');
  }
  const c = a.querySelector('.close');
  if (c) {
    const x = document.createElementNS(NS, 'svg');
    x.setAttribute('viewBox', '0 0 8 7');
    x.innerHTML = '<path d="M2 2l4 3M6 2l-4 3" stroke="#ddd" stroke-width="1" fill="none"/>';
    c.appendChild(x);
  }
});
})();
```
